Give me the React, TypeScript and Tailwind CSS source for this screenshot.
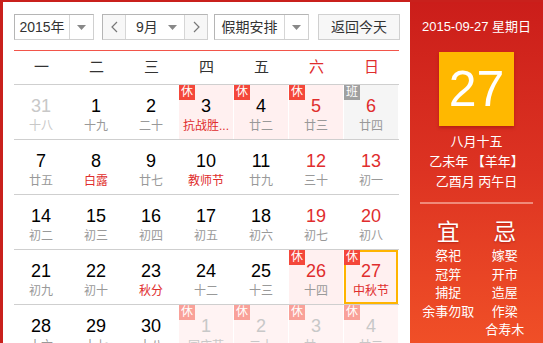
import React from 'react'

// CJK strings are written as escapes so the file stays plain ASCII
const XIU = '\u4f11'
const BAN = '\u73ed'

type Day = {
  n: number
  lunar: string
  badge?: string
  red?: boolean // festival / solar term text
  other?: boolean
  selected?: boolean
}

const weeks: Day[][] = [
  [
    { n: 31, lunar: '\u5341\u516b', other: true },
    { n: 1, lunar: '\u5341\u4e5d' },
    { n: 2, lunar: '\u4e8c\u5341' },
    { n: 3, lunar: '\u6297\u6218\u80dc...', badge: XIU, red: true },
    { n: 4, lunar: '\u5eff\u4e8c', badge: XIU },
    { n: 5, lunar: '\u5eff\u4e09', badge: XIU },
    { n: 6, lunar: '\u5eff\u56db', badge: BAN },
  ],
  [
    { n: 7, lunar: '\u5eff\u4e94' },
    { n: 8, lunar: '\u767d\u9732', red: true },
    { n: 9, lunar: '\u5eff\u4e03' },
    { n: 10, lunar: '\u6559\u5e08\u8282', red: true },
    { n: 11, lunar: '\u5eff\u4e5d' },
    { n: 12, lunar: '\u4e09\u5341' },
    { n: 13, lunar: '\u521d\u4e00' },
  ],
  [
    { n: 14, lunar: '\u521d\u4e8c' },
    { n: 15, lunar: '\u521d\u4e09' },
    { n: 16, lunar: '\u521d\u56db' },
    { n: 17, lunar: '\u521d\u4e94' },
    { n: 18, lunar: '\u521d\u516d' },
    { n: 19, lunar: '\u521d\u4e03' },
    { n: 20, lunar: '\u521d\u516b' },
  ],
  [
    { n: 21, lunar: '\u521d\u4e5d' },
    { n: 22, lunar: '\u521d\u5341' },
    { n: 23, lunar: '\u79cb\u5206', red: true },
    { n: 24, lunar: '\u5341\u4e8c' },
    { n: 25, lunar: '\u5341\u4e09' },
    { n: 26, lunar: '\u5341\u56db', badge: XIU },
    { n: 27, lunar: '\u4e2d\u79cb\u8282', badge: XIU, red: true, selected: true },
  ],
  [
    { n: 28, lunar: '\u5341\u516d' },
    { n: 29, lunar: '\u5341\u4e03' },
    { n: 30, lunar: '\u5341\u516b' },
    { n: 1, lunar: '\u56fd\u5e86\u8282', badge: XIU, other: true },
    { n: 2, lunar: '\u4e8c\u5341', badge: XIU, other: true },
    { n: 3, lunar: '\u5eff\u4e00', badge: XIU, other: true },
    { n: 4, lunar: '\u5eff\u4e8c', badge: XIU, other: true },
  ],
]

const weekdays = ['\u4e00', '\u4e8c', '\u4e09', '\u56db', '\u4e94', '\u516d', '\u65e5']

function Caret() {
  return (
    <svg width="9" height="5" viewBox="0 0 9 5">
      <path d="M0 0h9L4.5 5z" fill="#888" />
    </svg>
  )
}

function Chevron({ dir }: { dir: 'left' | 'right' }) {
  return (
    <svg width="7" height="12" viewBox="0 0 7 12">
      <polyline
        points={dir === 'left' ? '6,1 1,6 6,11' : '1,1 6,6 1,11'}
        fill="none"
        stroke="#777"
        strokeWidth="1.2"
      />
    </svg>
  )
}

function Cell({ d, col }: { d: Day; col: number }) {
  const weekend = col >= 5
  let bg = 'bg-white'
  if (d.badge === XIU) bg = d.other ? 'bg-[#fff3f3]' : 'bg-[#fff0f0]'
  if (d.badge === BAN) bg = 'bg-[#f5f5f5]'

  let numColor = weekend ? 'text-[#e02d2d]' : 'text-[#000]'
  if (d.other) numColor = 'text-[#c8c8c8]'
  let lunarColor = d.red ? 'text-[#e02d2d]' : 'text-[#999]'
  if (d.other) lunarColor = 'text-[#c8c8c8]'

  const badgeBg = d.badge === BAN ? 'bg-[#a0a0a0]' : d.other ? 'bg-[#f9a199]' : 'bg-[#f4473a]'

  return (
    <div className="h-[55px] border-b border-[#cfcfcf]">
      <div
        className={`relative h-full mr-px ${bg} ${d.selected ? 'border-2 border-[#ffb400]' : ''}`}
      >
        {d.badge && (
          <div
            className={`absolute ${d.selected ? '-top-[2px] -left-[2px]' : 'top-0 left-0'} w-[16px] h-[15px] ${badgeBg} text-white text-[12px] leading-[15px] text-center`}
          >
            {d.badge}
          </div>
        )}
        <div className={`text-center ${d.selected ? 'pt-[9px]' : 'pt-[11px]'}`}>
          <div className={`text-[18px] leading-[20px] ${numColor}`}>{d.n}</div>
          <div className={`mt-[3px] text-[12px] leading-[14px] whitespace-nowrap ${lunarColor}`}>
            {d.lunar}
          </div>
        </div>
      </div>
    </div>
  )
}

export default function App() {
  return (
    <div className="w-[543px] h-[343px] overflow-hidden bg-white font-['Liberation_Sans','Noto_Sans_CJK_SC',sans-serif]">
      <div className="flex h-full border-l-[3px] border-t-2 border-[#c9201c]">
        {/* calendar side */}
        <div className="w-[407px] pl-[11px] pt-[12px] shrink-0">
          <div className="flex items-center h-[26px] text-[14px] text-[#333]">
            <div className="flex h-full border border-[#b5b5b5] border-r-[#d0d0d0] border-b-[#d0d0d0] bg-white">
              <div className="w-[54px] flex items-center justify-center">{'2015\u5e74'}</div>
              <div className="w-[24px] flex items-center justify-center border-l border-[#d6d6d6]">
                <Caret />
              </div>
            </div>
            <div className="ml-[8px] flex h-full border border-[#b5b5b5] border-r-[#d0d0d0] border-b-[#d0d0d0]">
              <div className="w-[22px] flex items-center justify-center bg-[#f7f7f7]">
                <Chevron dir="left" />
              </div>
              <div className="w-[60px] flex items-center border-l border-r border-[#d6d6d6] bg-white">
                <span className="pl-[10px] flex-1">{'9\u6708'}</span>
                <span className="pr-[7px] flex"><Caret /></span>
              </div>
              <div className="w-[22px] flex items-center justify-center bg-[#f7f7f7]">
                <Chevron dir="right" />
              </div>
            </div>
            <div className="ml-[6px] flex h-full border border-[#b5b5b5] border-r-[#d0d0d0] border-b-[#d0d0d0] bg-white">
              <div className="w-[69px] flex items-center justify-center">{'\u5047\u671f\u5b89\u6392'}</div>
              <div className="w-[24px] flex items-center justify-center border-l border-[#d6d6d6]">
                <Caret />
              </div>
            </div>
            <div className="ml-[9px] w-[82px] h-full flex items-center justify-center border border-[#d0d0d0] bg-[#f7f7f7]">
              {'\u8fd4\u56de\u4eca\u5929'}
            </div>
          </div>

          <div className="w-[385px] mt-[10px] border-t border-[#f2554a]">
            <div className="grid grid-cols-7 h-[34px] border-b border-[#cfcfcf] text-[15px]">
              {weekdays.map((w, i) => (
                <div
                  key={w}
                  className={`flex items-center justify-center ${i >= 5 ? 'text-[#e02d2d]' : 'text-[#333]'}`}
                >
                  {w}
                </div>
              ))}
            </div>
            {weeks.map((wk, r) => (
              <div key={r} className="grid grid-cols-7">
                {wk.map((d, c) => (
                  <Cell key={c} d={d} col={c} />
                ))}
              </div>
            ))}
          </div>
        </div>

        {/* info panel */}
        <div className="flex-1 bg-gradient-to-b from-[#cb1d1a] via-[#dd3322] to-[#f04f27] text-white text-center">
          <div className="pt-[16px] text-[13px] leading-[18px]">{'2015-09-27 \u661f\u671f\u65e5'}</div>
          <div className="mx-auto mt-[16px] w-[75px] h-[74px] bg-[#ffb800] shadow-[0_2px_3px_rgba(120,0,0,0.35)] flex items-center justify-center text-[50px] leading-none">
            27
          </div>
          <div className="mt-[6px] text-[13px] leading-[20px]">
            <div>{'\u516b\u6708\u5341\u4e94'}</div>
            <div>{'\u4e59\u672a\u5e74 \u3010\u7f8a\u5e74\u3011'}</div>
            <div>{'\u4e59\u9149\u6708 \u4e19\u5348\u65e5'}</div>
          </div>
          <div className="mx-[10px] mt-[10px] h-[2px] bg-[#f08a7a]" />
          <div className="grid grid-cols-2 px-[10px] mt-[15px]">
            <div className="text-[23px] leading-[26px] [text-shadow:0_1px_2px_rgba(120,0,0,0.45)]">{'\u5b9c'}</div>
            <div className="text-[23px] leading-[26px] [text-shadow:0_1px_2px_rgba(120,0,0,0.45)]">{'\u5fcc'}</div>
            <div className="mt-[2px] text-[13px] leading-[18.5px]">
              <div>{'\u796d\u7940'}</div>
              <div>{'\u51a0\u7b04'}</div>
              <div>{'\u6355\u6349'}</div>
              <div className="whitespace-nowrap">{'\u4f59\u4e8b\u52ff\u53d6'}</div>
            </div>
            <div className="mt-[2px] text-[13px] leading-[18.5px]">
              <div>{'\u5ac1\u5a36'}</div>
              <div>{'\u5f00\u5e02'}</div>
              <div>{'\u9020\u5c4b'}</div>
              <div>{'\u4f5c\u6881'}</div>
              <div>{'\u5408\u5bff\u6728'}</div>
            </div>
          </div>
        </div>
      </div>
    </div>
  )
}
